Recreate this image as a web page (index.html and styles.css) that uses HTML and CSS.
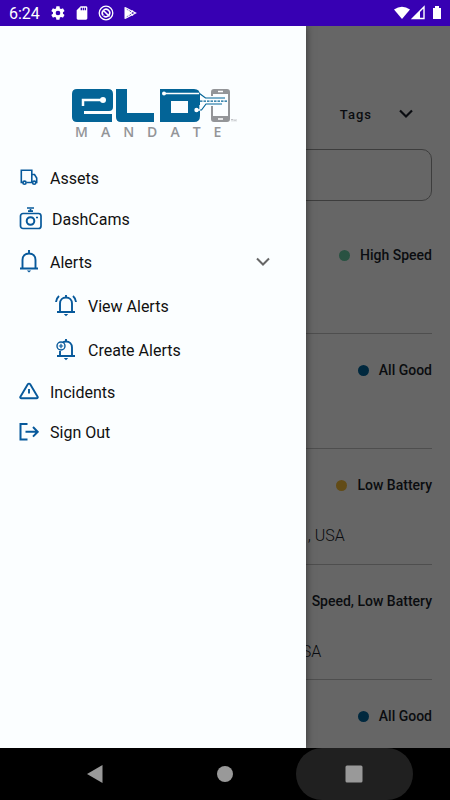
FILE: index.html
```html
<!DOCTYPE html>
<html lang="en">
<head>
<meta charset="utf-8">
<meta name="viewport" content="width=device-width, initial-scale=1">
<title>ELD Mandate</title>
<link rel="stylesheet" href="styles.css">
</head>
<body>
<header class="status">
  <span class="time">6:24</span>
  <svg width="16" height="16" viewBox="0 0 24 24" fill="currentColor"><path fill-rule="evenodd" d="M19.4 13c.1-.7.1-1.300 0-2l2.100-1.600c.2-.2.3-.5.1-.7l-2-3.400c-.1-.2-.4-.3-.6-.2l-2.500 1c-.5-.4-1.100-.7-1.700-1l-.4-2.600c0-.3-.2-.5-.5-.5h-4c-.3 0-.5.2-.5.5L9 5.100c-.6.3-1.200.6-1.700 1l-2.500-1c-.2-.1-.5 0-.6.2l-2 3.400c-.1.200-.1.500.1.700L4.500 11c-.1.700-.1 1.300 0 2l-2.200 1.600c-.2.200-.2.500-.1.700l2 3.400c.1.200.4.300.6.200l2.500-1c.5.400 1.100.7 1.700 1l.4 2.600c0 .3.200.5.500.5h4c.3 0 .5-.2.500-.5l.4-2.600c.6-.3 1.200-.6 1.700-1l2.500 1c.2.100.5 0 .6-.2l2-3.400c.1-.2.100-.5-.1-.7zM12 15.500a3.500 3.500 0 1 1 0-7 3.500 3.500 0 0 1 0 7z"/></svg>
  <svg width="16" height="16" viewBox="0 0 24 24" fill="currentColor"><path fill-rule="evenodd" d="M18 2h-8L4 8v12c0 1.100.9 2 2 2h12c1.100 0 2-.9 2-2V4c0-1.100-.9-2-2-2zM10 4h2v4h-2zM13 4h2v4h-2zM16 4h2v4h-2z"/></svg>
  <svg width="16" height="16" viewBox="0 0 16 16" fill="none" stroke="currentColor"><circle cx="8" cy="8" r="6.800" stroke-width="1.300"/><path d="M5.200 10.500A3.700 3.700 0 1 1 11 10.200M6 6l5.500 5.500M5.500 10.800q2.500 1.800 4.500.4" stroke-width="1.600"/></svg>
  <svg width="16" height="16" viewBox="0 0 16 16"><path d="M2.500 2v12l6-6z" fill="#fff"/><path d="M3 2.500L13.500 8 3 13.500M6 5.500l5 5M6 10.500l5-5" fill="none" stroke="#fff" stroke-width="1.300"/></svg>
  <span class="grow"></span>
  <svg class="signals" width="48" height="16" viewBox="0 0 48 16"><path d="M0 4.500Q8-1 16 4.500L8 14z" fill="#fff"/><path d="M18.500 13.500L30 2v11.500z" fill="none" stroke="#fff" stroke-width="1.400"/><path d="M18 14L26 6v8z" fill="#fff"/><path d="M39 3h2V1h4v2h2v11h-8z" fill="#fff"/></svg>
</header>

<div class="screen">
  <main class="page">
    <div class="filters">
      <button class="tags" type="button">Tags
        <svg width="14" height="10" viewBox="0 0 14 10" fill="none" stroke="currentColor" stroke-width="2.200"><path d="M1 1.500l6 6 6-6"/></svg>
      </button>
    </div>
    <input class="search" type="text" aria-label="Search assets">
    <ul class="assets">
      <li class="asset"><p class="state"><i class="dot green"></i>High Speed</p></li>
      <li class="asset"><p class="state"><i class="dot blue"></i>All Good</p></li>
      <li class="asset located"><p class="state"><i class="dot yellow"></i>Low Battery</p><p class="place">, USA</p></li>
      <li class="asset"><p class="state">Speed, Low Battery</p><p class="place short">USA</p></li>
      <li class="asset"><p class="state"><i class="dot blue"></i>All Good</p></li>
    </ul>
  </main>
  <div class="scrim"></div>

  <nav class="drawer" aria-label="Main menu">
    <svg class="logo" width="168" height="52" viewBox="0 0 168 52" role="img" aria-label="ELD Mandate">
      <g fill="#036497">
        <path d="M8 4h31q5 0 5 5v13q0 4-4 4H15v3h28v8H8q-5 0-5-5V9q0-5 5-5z"/>
        <path d="M47 4h11v24h27v9H52q-5 0-5-5z"/>
        <path fill-rule="evenodd" d="M91 4h34q6 0 6 6v21q0 6-6 6H91V16h11v12h17V13H91z"/>
      </g>
      <path d="M14 21v-6h19" fill="none" stroke="#fbfeff" stroke-width="2.500"/>
      <circle cx="34" cy="15" r="3" fill="#fbfeff"/>
      <path d="M91 13h28v3H91z" fill="#036497"/>
      <path fill="#939598" fill-rule="evenodd" d="M145 4h13q3 0 3 3v27q0 3-3 3h-13q-3 0-3-3V7q0-3 3-3zM144 9v22h15V9z"/>
      <path d="M149 6.500h5M149 34h5" stroke="#fff" stroke-width="1.500"/>
      <path d="M141 11h11v10h-11z" fill="#fbfeff"/>
      <path d="M95 8.500h35M128 25h3v-5" fill="none" stroke="#fff" stroke-width="1.300"/>
      <path d="M130.500 8.500l6 4.500H156M131 25h1.500l4.500-6h16" fill="none" stroke="#036497" stroke-width="1.200"/>
      <path d="M131 16.200h27" stroke="#036497" stroke-width="1.300" stroke-dasharray="2.500 1"/>
      <circle cx="95" cy="8.500" r="2" fill="#fff"/><circle cx="127.500" cy="25" r="2.200" fill="#fff"/>
      <path d="M162 34.500h2M163 34.500v2M165 36.500v-2l1 1 1-1v2" stroke="#939598" stroke-width=".5" fill="none"/>
      <text class="wordmark" x="6" y="52">MANDATE</text>
    </svg>

    <a class="item" href="#assets">
      <svg width="20" height="20" viewBox="0 0 20 20" fill="none" stroke="currentColor" stroke-width="1.600"><path d="M4.500 14.500H2.300V2.300h10.500v12.200H7.500M12.800 6.500h2.700l2.200 3.500v4.500h-.7M14 14.500h-1.200"/><circle cx="5.500" cy="14.700" r="1.600"/><circle cx="15.200" cy="14.700" r="1.600"/></svg>
      Assets</a>
    <a class="item cams" href="#dashcams">
      <svg width="23" height="24" viewBox="0 0 23 24" fill="none" stroke="currentColor" stroke-width="1.700"><path d="M8 1h7M9 4.200h5M11.500 2v2" /><rect x="1.500" y="6.500" width="20.500" height="15" rx="2.500"/><circle cx="11.500" cy="14" r="3.800" stroke-width="2"/><path d="M17 10.500h2"/></svg>
      DashCams</a>
    <a class="item alerts" href="#alerts" aria-expanded="true">
      <svg width="20" height="24" viewBox="0 0 20 24" fill="none" stroke="currentColor" stroke-width="1.900"><path d="M1 18.500h18M3.500 18.500V10c0-4 2.600-6.500 6.500-6.500s6.500 2.500 6.500 6.500v8.500M10 3.500V0"/><path d="M7.800 20.500h4.400L10 22.500z" fill="currentColor" stroke="none"/></svg>
      Alerts
      <svg class="chevron" width="14" height="10" viewBox="0 0 14 10" fill="none" stroke="currentColor" stroke-width="2"><path d="M1 1.500l6 6 6-6"/></svg></a>
    <a class="item sub" href="#view">
      <svg width="22" height="24" viewBox="0 0 22 24" fill="none" stroke="currentColor" stroke-width="1.900"><path d="M2 18h18M5 18V9.500C5 5.800 7.500 3.500 11 3.500s6 2.300 6 6V18M11 4V1M1 8c.3-2.500 1.300-4.500 3-6M21 8c-.3-2.500-1.300-4.500-3-6"/><path d="M8.800 20h4.400L11 22.200z" fill="currentColor" stroke="none"/></svg>
      View Alerts</a>
    <a class="item sub" href="#create">
      <svg width="22" height="24" viewBox="0 0 22 24" fill="none" stroke="currentColor" stroke-width="1.900"><path d="M2 18h18M5 18v-5M8 4.200q1.200-.7 3-.7c3.500 0 6 2.300 6 6V18M11 4V1"/><path d="M8.800 20h4.400L11 22.200z" fill="currentColor" stroke="none"/><circle cx="6" cy="8" r="4" stroke-width="1.400"/><path d="M3.800 8h4.400M6 5.800v4.400" stroke-width="1.200"/></svg>
      Create Alerts</a>
    <a class="item" href="#incidents">
      <svg width="20" height="20" viewBox="0 0 20 20" fill="none" stroke="currentColor" stroke-width="1.900" stroke-linejoin="round"><path d="M8.800 2.300L1.400 14.700c-.5.900 0 1.600 1 1.600h15.200c1 0 1.500-.7 1-1.600L11.200 2.300c-.6-.9-1.800-.9-2.400 0zM10 7v4.500"/></svg>
      Incidents</a>
    <a class="item" href="#signout">
      <svg width="20" height="20" viewBox="0 0 20 20" fill="none" stroke="currentColor" stroke-width="2"><path d="M8.500 2H1.500v15.500h7M6.500 9.800h12M14 5l4.700 4.800L14 14.600"/></svg>
      Sign Out</a>
  </nav>
</div>

<footer class="keys">
  <button class="key" type="button" aria-label="Back"><svg width="18" height="20" viewBox="0 0 18 20"><path d="M0 10L15.500 1v18z" fill="#999"/></svg></button>
  <button class="key" type="button" aria-label="Home"><svg width="18" height="18" viewBox="0 0 18 18"><circle cx="9" cy="9" r="8" fill="#999"/></svg></button>
  <button class="key pressed" type="button" aria-label="Recent apps"><svg width="18" height="18" viewBox="0 0 18 18"><rect x=".5" y=".5" width="17" height="17" rx="1.500" fill="#999"/></svg></button>
</footer>
</body>
</html>
```

FILE: styles.css
```css
* { box-sizing: border-box; }

body {
  margin: 0;
  min-height: 100vh;
  display: flex;
  flex-direction: column;
  font-family: Roboto, "Noto Sans", sans-serif;
  background: #fff;
}

p, ul { margin: 0; padding: 0; }

svg { flex: none; }

/* System status bar */
.status {
  display: flex;
  align-items: center;
  gap: 8px;
  height: 26px;
  padding: 0 8px 0 9px;
  background: #3700b3;
  color: #fff;
}

.time { margin-right: 2px; font-size: 16px; }

.grow { flex: 1; }

.screen {
  position: relative;
  flex: 1;
  overflow: hidden;
}

/* Asset list behind the drawer */
.page {
  padding: 66px 18px 0 18px;
  color: #1b1f2b;
}

.filters {
  display: flex;
  justify-content: flex-end;
  padding-right: 19px;
}

.tags {
  display: flex;
  align-items: center;
  gap: 27px;
  height: 44px;
  padding: 0;
  border: 0;
  background: none;
  color: inherit;
  font: 500 13px Roboto, sans-serif;
  letter-spacing: 1px;
}

.search {
  display: block;
  width: 100%;
  height: 52px;
  margin-top: 13px;
  padding: 0 16px;
  border: 1px solid #999;
  border-radius: 10px;
  background: none;
  font: 16px Roboto, sans-serif;
}

.assets { padding-top: 18px; list-style: none; }

.asset {
  min-height: 115px;
  padding-top: 26px;
  border-bottom: 1px solid #c4c4c4;
}

.located { min-height: 116px; }

.asset:last-child { min-height: 0; border: 0; }

.state {
  display: flex;
  justify-content: flex-end;
  align-items: center;
  font-size: 14px;
  font-weight: 500;
  line-height: 20px;
}

.dot {
  width: 11px;
  height: 11px;
  margin-right: 10px;
  border-radius: 50%;
}

.green { background: #66cca5; }
.blue { background: #00659c; }
.yellow { background: #f5bc38; }

.place {
  margin: 30px 0 0 70%;
  font-size: 16px;
  font-weight: 300;
  line-height: 22px;
}

.short { margin-left: 66%; }

.scrim {
  position: absolute;
  inset: 0;
  background: rgba(0, 0, 0, 0.6);
}

/* Navigation drawer */
.drawer {
  position: absolute;
  inset: 0 auto 0 0;
  display: flex;
  flex-direction: column;
  width: 68%;
  padding-top: 59px;
  background: #fbfeff;
  box-shadow: 0 0 8px rgba(0, 0, 0, 0.5);
}

.logo {
  align-self: center;
  margin-bottom: 21px;
  overflow: visible;
}

.wordmark {
  fill: #939598;
  font: 700 14px "Open Sans", sans-serif;
  font-weight: 600;
  letter-spacing: 13px;
}

.item {
  display: flex;
  align-items: center;
  gap: 11px;
  height: 40px;
  padding: 0 36px 0 19px;
  color: #111;
  font-size: 16px;
  text-decoration: none;
}

.item svg { color: #07599b; }
.cams { gap: 10px; height: 42px; }
.alerts, .sub { height: 44px; }
.sub { padding-left: 55px; }

.item .chevron { margin-left: auto; color: #666; }

/* System navigation keys */
.keys {
  display: flex;
  justify-content: center;
  gap: 12px;
  height: 52px;
  background: #000;
}

.key {
  display: grid;
  place-items: center;
  width: 26%;
  padding: 0;
  border: 0;
  border-radius: 26px;
  background: none;
}

.pressed { background: #202020; }
```
